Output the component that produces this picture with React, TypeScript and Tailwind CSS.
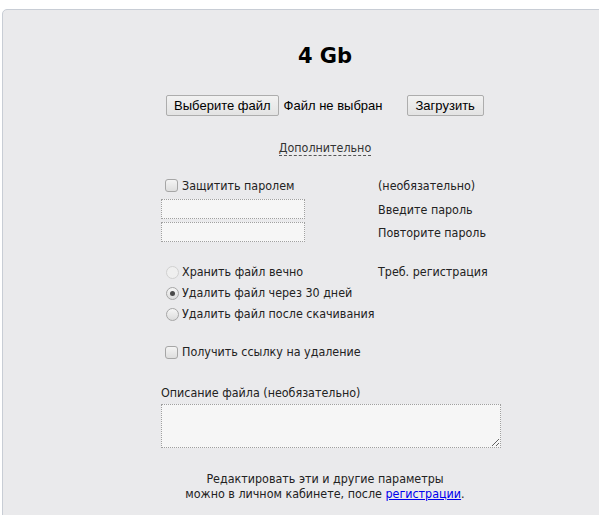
const font = "font-['DejaVu_Sans_Condensed','DejaVu_Sans',sans-serif]";

function Checkbox() {
  return (
    <span className="inline-block h-[13px] w-[13px] shrink-0 rounded-[3px] border border-[#a6a6a6] bg-gradient-to-b from-[#f4f4f4] to-[#dedede]" />
  );
}

function Radio({ checked = false, disabled = false }: { checked?: boolean; disabled?: boolean }) {
  return (
    <span
      className={
        disabled
          ? "flex h-[13px] w-[13px] shrink-0 items-center justify-center rounded-full border border-[#d0d0d0] bg-[#efefef]"
          : "flex h-[13px] w-[13px] shrink-0 items-center justify-center rounded-full border border-[#a6a6a6] bg-gradient-to-b from-[#f6f6f6] to-[#dcdcdc]"
      }
    >
      {checked && <span className="h-[5px] w-[5px] rounded-full bg-[#4a4a4a]" />}
    </span>
  );
}

export default function App() {
  return (
    <div className={`h-[515px] w-[599px] overflow-hidden bg-white text-[12.4px] text-[#222] ${font}`}>
      <div className="ml-[2px] mt-[9px] h-[530px] w-[646px] rounded-tl-[5px] border border-[#c8cdd5] bg-[#eaeaec]">
        <div className="flex flex-col items-center">
          <h1 className="mt-[33px] h-[26px] font-['DejaVu_Sans',sans-serif] text-[21px] font-bold leading-[26px] text-black">4 Gb</h1>

          <div className="mt-[26px] flex h-[21px] items-center font-['Liberation_Sans',Arial,sans-serif] text-[13px] text-black">
            <button className="h-[21px] rounded-[2px] border border-[#adadad] bg-gradient-to-b from-[#f2f2f2] to-[#e3e3e3] px-[7px] leading-[19px]">
              Выберите файл
            </button>
            <span className="ml-[5px]">Файл не выбран</span>
            <button className="ml-[24px] h-[21px] rounded-[2px] border border-[#adadad] bg-gradient-to-b from-[#f2f2f2] to-[#e3e3e3] px-[8px] leading-[19px]">
              Загрузить
            </button>
          </div>

          <a className="mt-[25px] border-b border-dashed border-[#555] leading-[14px] text-[#333]">Дополнительно</a>
        </div>

        <div className="ml-[158px] w-[340px]">
          <div className="mt-[20px] flex h-[20px] items-center">
            <div className="flex w-[217px] items-center gap-[4px] pl-[4px]">
              <Checkbox />
              <span>Защитить паролем</span>
            </div>
            <span>(необязательно)</span>
          </div>
          <div className="mt-[3px] flex h-[20px] items-center">
            <div className="w-[217px]">
              <input className="block h-[20px] w-[144px] border border-dotted border-[#a0a0a0] bg-[#f6f6f6] outline-none" />
            </div>
            <span className="pt-[2px]">Введите пароль</span>
          </div>
          <div className="mt-[3px] flex h-[20px] items-center">
            <div className="w-[217px]">
              <input className="block h-[20px] w-[144px] border border-dotted border-[#a0a0a0] bg-[#f6f6f6] outline-none" />
            </div>
            <span className="pt-[2px]">Повторите пароль</span>
          </div>

          <div className="mt-[20px] flex h-[21px] items-center">
            <div className="flex w-[217px] items-center gap-[3px] pl-[5px] text-[#222]">
              <Radio disabled />
              <span>Хранить файл вечно</span>
            </div>
            <span>Треб. регистрация</span>
          </div>
          <div className="flex h-[21px] items-center gap-[3px] pl-[5px]">
            <Radio checked />
            <span>Удалить файл через 30 дней</span>
          </div>
          <div className="flex h-[20px] items-center gap-[3px] pl-[5px]">
            <Radio />
            <span>Удалить файл после скачивания</span>
          </div>

          <div className="mt-[18px] flex h-[20px] items-center gap-[4px] pl-[4px]">
            <Checkbox />
            <span>Получить ссылку на удаление</span>
          </div>

          <div className="mt-[23px] leading-[16px]">Описание файла (необязательно)</div>
          <textarea className="mt-[3px] block h-[44px] w-[340px] border border-dotted border-[#a0a0a0] bg-[#f6f6f6] outline-none" />
        </div>

        <p className="mt-[23px] text-center leading-[15px]">
          Редактировать эти и другие параметры
          <br />
          можно в личном кабинете, после <a className="text-[#0000ee] underline">регистрации</a>.
        </p>
      </div>
    </div>
  );
}
